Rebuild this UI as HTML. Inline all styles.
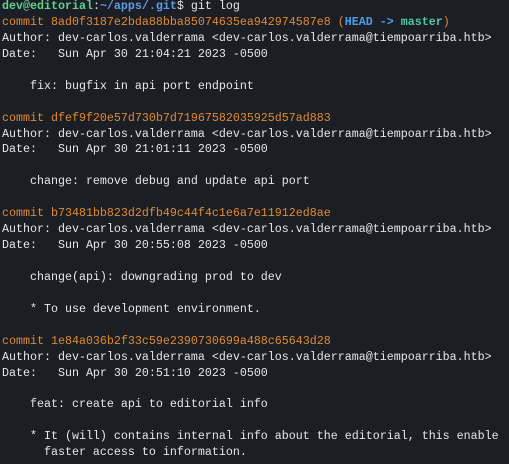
<!DOCTYPE html>
<html><head><meta charset="utf-8"><style>
html,body{margin:0;padding:0;background:#1c1e26;width:509px;height:464px;overflow:hidden}
pre{margin:0;padding:0 0 0 2px;position:relative;top:-1px;font-family:"Liberation Mono",monospace;font-size:11.67px;line-height:15.93px;color:#e6e6e6;white-space:pre}
.c{color:#e08a2e}.g{color:#5fd38d;font-weight:bold}.b{color:#5c9de8;font-weight:bold}.h{color:#4d9ee8;font-weight:bold}.m{color:#4ec9a0;font-weight:bold}
</style></head><body><pre><span class="g">dev@editorial</span>:<span class="b">~/apps/.git</span>$ git log
<span class="c">commit 8ad0f3187e2bda88bba85074635ea942974587e8 (</span><span class="h">HEAD -&gt; </span><span class="m">master</span><span class="c">)</span>
Author: dev-carlos.valderrama &lt;dev-carlos.valderrama@tiempoarriba.htb&gt;
Date:   Sun Apr 30 21:04:21 2023 -0500

    fix: bugfix in api port endpoint

<span class="c">commit dfef9f20e57d730b7d71967582035925d57ad883</span>
Author: dev-carlos.valderrama &lt;dev-carlos.valderrama@tiempoarriba.htb&gt;
Date:   Sun Apr 30 21:01:11 2023 -0500

    change: remove debug and update api port

<span class="c">commit b73481bb823d2dfb49c44f4c1e6a7e11912ed8ae</span>
Author: dev-carlos.valderrama &lt;dev-carlos.valderrama@tiempoarriba.htb&gt;
Date:   Sun Apr 30 20:55:08 2023 -0500

    change(api): downgrading prod to dev

    * To use development environment.

<span class="c">commit 1e84a036b2f33c59e2390730699a488c65643d28</span>
Author: dev-carlos.valderrama &lt;dev-carlos.valderrama@tiempoarriba.htb&gt;
Date:   Sun Apr 30 20:51:10 2023 -0500

    feat: create api to editorial info

    * It (will) contains internal info about the editorial, this enable
      faster access to information.
</pre></body></html>
